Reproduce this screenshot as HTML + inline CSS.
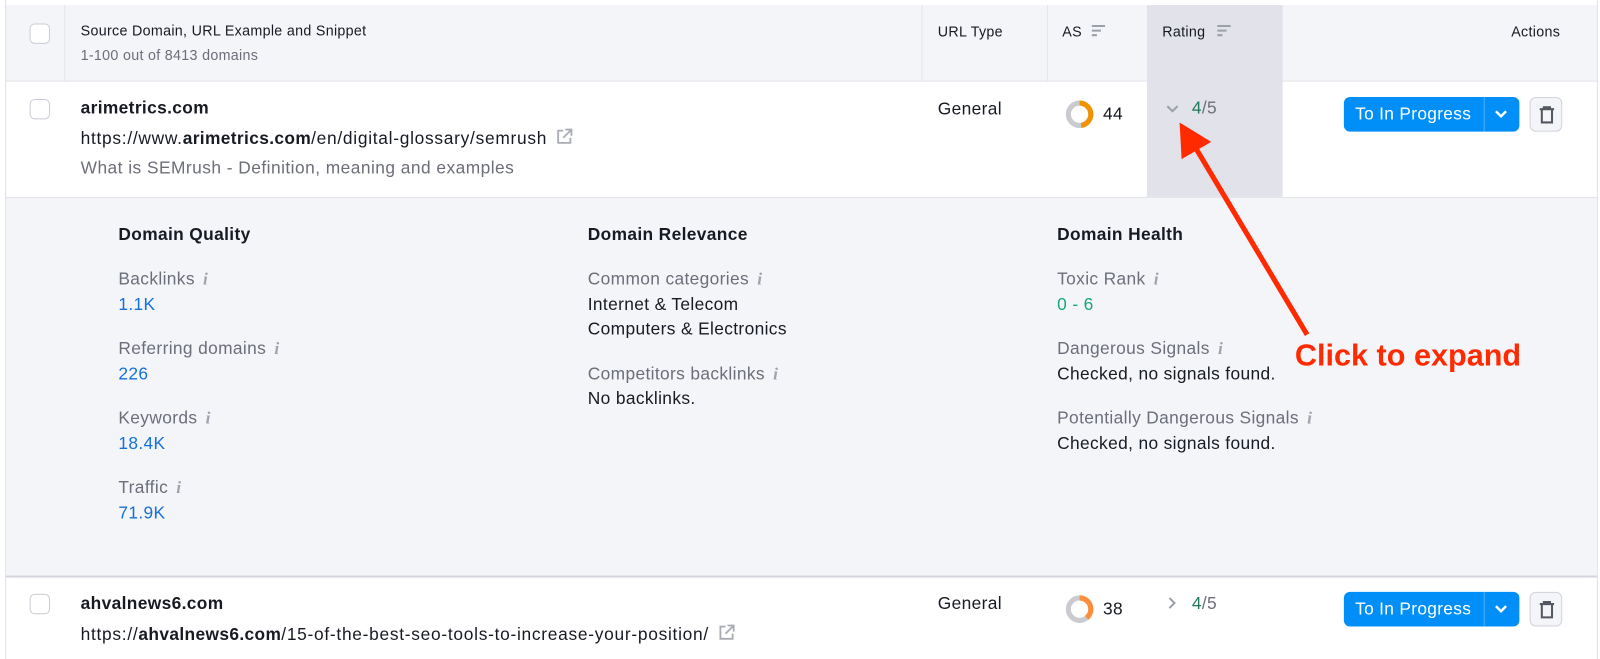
<!DOCTYPE html>
<html><head><meta charset="utf-8"><style>
*{margin:0;padding:0;box-sizing:border-box}
body{width:1600px;height:646px;overflow:hidden;background:#fff;font-family:"Liberation Sans",Arial,sans-serif;position:relative;color:#171a22}
#w{position:absolute;left:0;top:0;width:1568px;height:633px;transform:scale(1.0204);transform-origin:0 0}
.a{position:absolute;white-space:nowrap}
.cb{position:absolute;width:20px;height:20px;border:1px solid #c9ccd4;border-radius:5px;background:#fff}
.h{font-size:14px;color:#171a22;letter-spacing:0.3px}
.g{color:#6c6e79}
.t{font-size:17px;letter-spacing:0.35px}
.u{letter-spacing:0.7px}
.u b{letter-spacing:0.35px}
.b{color:#1571d6}
.i{font-family:"Liberation Serif",serif;font-style:italic;color:#a0a3ad;font-size:17px;margin-left:8px;font-weight:bold}
.btn{position:absolute;height:34px;background:#008ff8;border-radius:6px;color:#fff;font-size:17px;letter-spacing:0.3px}
.tr{position:absolute;width:32px;height:34px;border:1px solid #d0d3da;border-radius:6px;background:#f4f5f9}
.ext{display:inline-block;vertical-align:-2px;margin-left:8px}
</style></head><body><div id="w">
<div class="a" style="left:5px;top:5px;width:1560px;height:75px;background:#f4f5f9;border-bottom:1px solid #e3e5ea"></div>
<div class="a" style="left:5px;top:0;width:1px;height:646px;background:#e0e2e8"></div>
<div class="a" style="left:1565px;top:0;width:1px;height:646px;background:#e0e2e8"></div>
<div class="a" style="left:63px;top:5px;width:1px;height:75px;background:#e3e5ea"></div>
<div class="a" style="left:903px;top:5px;width:1px;height:75px;background:#e3e5ea"></div>
<div class="a" style="left:1026px;top:5px;width:1px;height:75px;background:#e3e5ea"></div>
<div class="a" style="left:1124px;top:5px;width:133px;height:188px;background:#e1e2ea"></div>
<div class="cb" style="left:29px;top:23px"></div>
<div class="a h" style="left:79px;top:22px">Source Domain, URL Example and Snippet</div>
<div class="a h g" style="left:79px;top:46px">1-100 out of 8413 domains</div>
<div class="a h" style="left:919px;top:23px">URL Type</div>
<div class="a h" style="left:1041px;top:23px">AS</div>
<svg class="a" style="left:1069px;top:24px" width="16" height="12"><path d="M1 1.5h13M1 6h9M1 10.5h5" stroke="#9ca0aa" stroke-width="2"/></svg>
<div class="a h" style="left:1139px;top:23px">Rating</div>
<svg class="a" style="left:1192px;top:24px" width="16" height="12"><path d="M1 1.5h13M1 6h9M1 10.5h5" stroke="#9ca0aa" stroke-width="2"/></svg>
<div class="a h" style="left:1481px;top:23px">Actions</div>

<div class="cb" style="left:29px;top:97px"></div>
<div class="a t" style="left:79px;top:96px;font-weight:bold">arimetrics.com</div>
<div class="a t u" style="left:79px;top:125px">https://www.<b>arimetrics.com</b>/en/digital-glossary/semrush<svg class="ext" width="18" height="18"><path d="M8 3H3v12h12v-5M10 2h6v6M16 2l-8 8" stroke="#a9acb5" stroke-width="1.8" fill="none"/></svg></div>
<div class="a t g" style="left:79px;top:155px;letter-spacing:0.45px">What is SEMrush - Definition, meaning and examples</div>
<div class="a t" style="left:919px;top:97px">General</div>
<svg class="a" style="left:1043px;top:97px" width="30" height="30"><circle cx="15" cy="15" r="11" fill="none" stroke="#c9cbd1" stroke-width="5"/><path d="M15 4A11 11 0 0 1 16.5 25.9" fill="none" stroke="#f39200" stroke-width="5"/></svg>
<div class="a t" style="left:1081px;top:102px">44</div>
<svg class="a" style="left:1142px;top:102px" width="14" height="10"><path d="M2 2l5 5 5-5" stroke="#9ca0aa" stroke-width="2" fill="none"/></svg>
<div class="a t" style="left:1168px;top:96px"><span style="color:#1f7a5a">4</span><span class="g">/5</span></div>
<div class="btn" style="left:1317px;top:95px;width:172px"><span class="a" style="left:11px;top:7px">To In Progress</span><div class="a" style="left:137px;top:0;width:1px;height:34px;background:#4fb0fa"></div><svg class="a" style="left:147px;top:12px" width="14" height="10"><path d="M2 2l5 5 5-5" stroke="#fff" stroke-width="2.4" fill="none"/></svg></div>
<div class="tr" style="left:1499px;top:95px"><svg class="a" style="left:8px;top:8px" width="16" height="18"><path d="M1 3h14M5 3V1h6v2M3 4v12h10V4" stroke="#555861" stroke-width="2" fill="none"/></svg></div>

<div class="a" style="left:6px;top:193px;width:1559px;height:373px;background:#f4f5f9;border-top:1px solid #e3e5ea;border-bottom:2px solid #d3d5dc"></div>
<div class="a t" style="left:116px;top:220px;font-weight:bold">Domain Quality</div>
<div class="a t g" style="left:116px;top:264px">Backlinks<span class="i">i</span></div>
<div class="a t b" style="left:116px;top:289px">1.1K</div>
<div class="a t g" style="left:116px;top:332px">Referring domains<span class="i">i</span></div>
<div class="a t b" style="left:116px;top:357px">226</div>
<div class="a t g" style="left:116px;top:400px">Keywords<span class="i">i</span></div>
<div class="a t b" style="left:116px;top:425px">18.4K</div>
<div class="a t g" style="left:116px;top:468px">Traffic<span class="i">i</span></div>
<div class="a t b" style="left:116px;top:493px">71.9K</div>

<div class="a t" style="left:576px;top:220px;font-weight:bold">Domain Relevance</div>
<div class="a t g" style="left:576px;top:264px">Common categories<span class="i">i</span></div>
<div class="a t" style="left:576px;top:289px">Internet &amp; Telecom</div>
<div class="a t" style="left:576px;top:313px">Computers &amp; Electronics</div>
<div class="a t g" style="left:576px;top:357px">Competitors backlinks<span class="i">i</span></div>
<div class="a t" style="left:576px;top:381px">No backlinks.</div>

<div class="a t" style="left:1036px;top:220px;font-weight:bold">Domain Health</div>
<div class="a t g" style="left:1036px;top:264px">Toxic Rank<span class="i">i</span></div>
<div class="a t" style="left:1036px;top:289px;color:#18a573">0 - 6</div>
<div class="a t g" style="left:1036px;top:332px">Dangerous Signals<span class="i">i</span></div>
<div class="a t" style="left:1036px;top:357px">Checked, no signals found.</div>
<div class="a t g" style="left:1036px;top:400px">Potentially Dangerous Signals<span class="i">i</span></div>
<div class="a t" style="left:1036px;top:425px">Checked, no signals found.</div>

<div class="cb" style="left:29px;top:582px"></div>
<div class="a t" style="left:79px;top:582px;font-weight:bold">ahvalnews6.com</div>
<div class="a t u" style="left:79px;top:611px">https://<b>ahvalnews6.com</b>/15-of-the-best-seo-tools-to-increase-your-position/<svg class="ext" width="18" height="18"><path d="M8 3H3v12h12v-5M10 2h6v6M16 2l-8 8" stroke="#a9acb5" stroke-width="1.8" fill="none"/></svg></div>
<div class="a t" style="left:919px;top:582px">General</div>
<svg class="a" style="left:1043px;top:582px" width="30" height="30"><circle cx="15" cy="15" r="11" fill="none" stroke="#c9cbd1" stroke-width="5"/><path d="M15 4A11 11 0 0 1 22 23.5" fill="none" stroke="#ff8c3a" stroke-width="5"/></svg>
<div class="a t" style="left:1081px;top:587px">38</div>
<svg class="a" style="left:1144px;top:584px" width="10" height="14"><path d="M2 2l5 5-5 5" stroke="#9ca0aa" stroke-width="2" fill="none"/></svg>
<div class="a t" style="left:1168px;top:582px"><span style="color:#1f7a5a">4</span><span class="g">/5</span></div>
<div class="btn" style="left:1317px;top:580px;width:172px"><span class="a" style="left:11px;top:7px">To In Progress</span><div class="a" style="left:137px;top:0;width:1px;height:34px;background:#4fb0fa"></div><svg class="a" style="left:147px;top:12px" width="14" height="10"><path d="M2 2l5 5 5-5" stroke="#fff" stroke-width="2.4" fill="none"/></svg></div>
<div class="tr" style="left:1499px;top:580px"><svg class="a" style="left:8px;top:8px" width="16" height="18"><path d="M1 3h14M5 3V1h6v2M3 4v12h10V4" stroke="#555861" stroke-width="2" fill="none"/></svg></div>

<svg class="a" style="left:0;top:0" width="1568" height="646"><line x1="1281" y1="328" x2="1170" y2="142" stroke="#ff2a00" stroke-width="5"/><polygon points="1156,120 1187,139 1158,156" fill="#ff2a00"/></svg>
<div class="a" style="left:1269px;top:332px;font-size:30px;font-weight:bold;color:#ff2a00">Click to expand</div>
</div></body></html>
